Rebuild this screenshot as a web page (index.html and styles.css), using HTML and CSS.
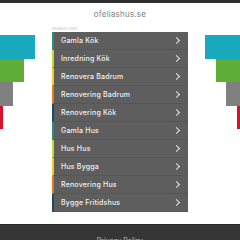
FILE: index.html
```html
<!DOCTYPE html>
<html>
<head>
<meta charset="utf-8">
<link rel="stylesheet" href="styles.css">
</head>
<body>
<div class="topbar"></div>
<div class="title">ofeliashus.se</div>
<div class="main">
  <div class="side side-left">
    <div class="bar teal" style="width:35px"></div>
    <div class="bar green" style="width:24px"></div>
    <div class="bar gray" style="width:13px"></div>
    <div class="bar red" style="width:3px"></div>
  </div>
  <div class="center">
    <div class="related">Related Links</div>
    <ul class="links">
      <li class="c1">Gamla Kök<span class="chev"></span></li>
      <li class="c2">Inredning Kök<span class="chev"></span></li>
      <li class="c3">Renovera Badrum<span class="chev"></span></li>
      <li class="c4">Renovering Badrum<span class="chev"></span></li>
      <li class="c5">Renovering Kök<span class="chev"></span></li>
      <li class="c1">Gamla Hus<span class="chev"></span></li>
      <li class="c2">Hus Hus<span class="chev"></span></li>
      <li class="c3">Hus Bygga<span class="chev"></span></li>
      <li class="c4">Renovering Hus<span class="chev"></span></li>
      <li class="c5">Bygge Fritidshus<span class="chev"></span></li>
    </ul>
  </div>
  <div class="side side-right">
    <div class="bar teal" style="width:35px"></div>
    <div class="bar green" style="width:24px"></div>
    <div class="bar gray" style="width:14px"></div>
    <div class="bar red" style="width:3px"></div>
  </div>
</div>
<div class="footer"><span class="foot-text">Privacy Policy</span></div>
</body>
</html>
```
FILE: styles.css
```css
html, body {
  margin: 0;
  padding: 0;
  background: #ffffff;
  font-family: "Inter", "Open Sans", sans-serif;
  overflow: hidden;
  width: 240px;
  height: 240px;
}
.topbar {
  height: 3px;
  background: #2e2e2e;
}
.title {
  height: 22px;
  line-height: 22px;
  text-align: center;
  font-size: 8px;
  color: #808080;
  letter-spacing: 0.2px;
}
.main {
  display: flex;
  height: 199px;
}
.side {
  width: 52px;
  display: flex;
  flex-direction: column;
  padding-top: 10px;
}
.side-left { align-items: flex-start; }
.side-right { align-items: flex-end; }
.bar { height: 23.5px; }
.teal { background: #19a9bd; }
.green { background: #5ead37; }
.gray { background: #808080; }
.red { background: #d6112b; }
.center {
  width: 136px;
  display: flex;
  flex-direction: column;
}
.related {
  font-size: 4px;
  color: #c4c4c4;
  height: 7px;
  line-height: 7px;
}
.links {
  list-style: none;
  margin: 0;
  padding: 0;
  background: #5e5e5e;
}
.links li {
  height: 17px;
  border-bottom: 1px solid #565656;
  border-left: 2px solid #2a8f80;
  display: flex;
  align-items: center;
  justify-content: space-between;
  padding: 0 7px 0 7px;
  font-size: 7px;
  font-weight: 500;
  color: #f2f2f2;
  letter-spacing: 0.2px;
}
.links li.c1 { border-left-color: #2a8f80; }
.links li.c2 { border-left-color: #c6d72e; }
.links li.c3 { border-left-color: #eecb22; }
.links li.c4 { border-left-color: #e47a1d; }
.links li.c5 { border-left-color: #1f4a66; }
.chev {
  width: 4px;
  height: 4px;
  border-right: 1px solid #e6e6e6;
  border-top: 1px solid #e6e6e6;
  transform: rotate(45deg);
  margin-right: 2px;
}
.footer {
  height: 16px;
  background: #363636;
  border-top: 1px solid #2a2a2a;
  text-align: center;
  overflow: hidden;
}
.foot-text {
  display: inline-block;
  margin-top: 11px;
  font-size: 7px;
  line-height: 9px;
  color: #bbb;
}
```
